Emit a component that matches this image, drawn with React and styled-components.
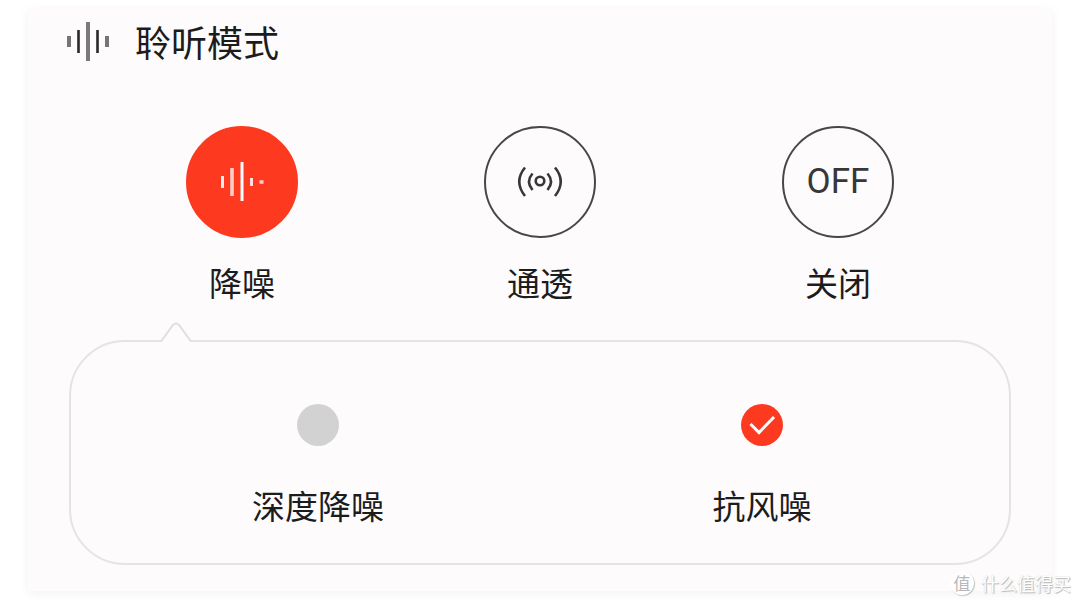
import React, { useState } from 'react';
import styled, { createGlobalStyle } from 'styled-components';

const GlobalStyle = createGlobalStyle`
  * {
    box-sizing: border-box;
  }
  body {
    margin: 0;
    background: #ffffff;
    color: #1c1c1c;
    font-family: "Noto Sans CJK SC", "Noto Sans", sans-serif;
  }
`;

const Page = styled.main`
  position: relative;
  padding: 8px 28px 14px;
  overflow: hidden;
`;

const Card = styled.section`
  padding: 0 41px 26px;
  background: #fdfbfc;
  box-shadow: 0 3px 10px rgba(0, 0, 0, 0.05);
`;

const Header = styled.header`
  display: flex;
  align-items: center;
  gap: 24px;
  height: 66px;

  svg {
    margin-left: -4px;
  }
`;

const Title = styled.h1`
  margin: 0;
  font-size: 36px;
  font-weight: 400;
  line-height: 52px;
`;

const Modes = styled.div`
  display: grid;
  grid-template-columns: repeat(3, 1fr);
  padding: 52px 24px 0;
`;

const ModeButton = styled.button`
  display: flex;
  flex-direction: column;
  align-items: center;
  gap: 20px;
  padding: 0;
  border: 0;
  background: none;
  color: inherit;
  font: inherit;
  font-size: 33px;
  line-height: 48px;
  cursor: pointer;
`;

const Circle = styled.span`
  display: flex;
  align-items: center;
  justify-content: center;
  width: 112px;
  height: 112px;
  border: 2px solid ${({ $active }) => ($active ? '#fd3a20' : '#484647')};
  border-radius: 50%;
  background: ${({ $active }) => ($active ? '#fd3a20' : 'transparent')};
  color: ${({ $active }) => ($active ? '#ffffff' : '#383637')};
`;

const OffText = styled.span`
  font-family: Roboto, "Liberation Sans", sans-serif;
  font-size: 35px;
  line-height: 40px;
`;

const Panel = styled.div`
  position: relative;
  display: grid;
  grid-template-columns: repeat(2, 1fr);
  margin-top: 34px;
  padding: 62px 25px 34px;
  border: 2px solid #e5e3e4;
  border-radius: 56px;
`;

const Pointer = styled.svg`
  position: absolute;
  top: -20px;
  left: 88px;
`;

const Option = styled.label`
  display: flex;
  flex-direction: column;
  align-items: center;
  gap: 35px;
  font-size: 33px;
  line-height: 48px;
  cursor: pointer;
`;

const Tick = styled.span`
  display: grid;
  place-items: center;

  > * {
    grid-area: 1 / 1;
  }
  svg {
    pointer-events: none;
  }
`;

const Checkbox = styled.input`
  appearance: none;
  width: 42px;
  height: 42px;
  margin: 0;
  border-radius: 50%;
  background: #d2d2d3;
  cursor: pointer;

  &:checked {
    background: #fd3a20;
  }
`;

const Watermark = styled.div`
  position: absolute;
  right: 9px;
  bottom: 8px;
  display: flex;
  align-items: center;
  gap: 7px;
  color: #ffffff;
  font-size: 18px;
  line-height: 28px;
  text-shadow: 1px 1px 1px #b5b5b5, 0 0 1px #cccccc;
`;

const Badge = styled.span`
  width: 24px;
  height: 24px;
  border-radius: 50%;
  background: #ffffff;
  box-shadow: 1px 1px 1px #c4c4c4;
  color: #b8b8b8;
  font-size: 17px;
  line-height: 23px;
  text-align: center;
  text-shadow: none;
`;

function SoundIcon() {
  return (
    <svg width="46" height="42" viewBox="0 0 46 42" fill="none" aria-hidden="true">
      <path d="M4 16v11M42 16v11" stroke="#777576" strokeWidth="4" />
      <path d="M13.500 10v23M32.500 10v23" stroke="#2b292a" strokeWidth="2.600" />
      <path d="M23 2v39" stroke="#7c7a7b" strokeWidth="4" />
    </svg>
  );
}

function NoiseIcon() {
  return (
    <svg width="48" height="42" viewBox="0 0 48 42" fill="none" stroke="currentColor" aria-hidden="true">
      <path d="M4.500 15v12" strokeWidth="3" opacity="0.900" />
      <path d="M14 7v28" strokeWidth="3.600" opacity="0.750" />
      <path d="M24 1v39" strokeWidth="3" />
      <path d="M33.500 17v8" strokeWidth="3" opacity="0.850" />
      <path d="M41.500 21h4" strokeWidth="3.500" opacity="0.750" />
    </svg>
  );
}

function TransparencyIcon() {
  return (
    <svg width="48" height="34" viewBox="0 0 48 34" fill="none" stroke="currentColor" strokeWidth="2.600" aria-hidden="true">
      <circle cx="24" cy="16" r="4.300" />
      <path d="M16.500 8.500Q9.500 16.500 16.500 25M31.500 8.500Q38.500 16.500 31.500 25" />
      <path d="M9 2.500Q-2.500 16.500 9 31M39 2.500Q50.500 16.500 39 31" />
    </svg>
  );
}

const MODES = [
  { id: 'anc', label: '降噪', icon: <NoiseIcon /> },
  { id: 'transparency', label: '通透', icon: <TransparencyIcon /> },
  { id: 'off', label: '关闭', icon: <OffText>OFF</OffText> },
];

const OPTIONS = [
  { id: 'deep', label: '深度降噪' },
  { id: 'wind', label: '抗风噪' },
];

export default function App() {
  const [mode, setMode] = useState('anc');
  const [checked, setChecked] = useState({ deep: false, wind: true });

  const toggle = (id) => {
    setChecked({ ...checked, [id]: !checked[id] });
  };

  return (
    <Page>
      <GlobalStyle />
      <Card>
        <Header>
          <SoundIcon />
          <Title>聆听模式</Title>
        </Header>
        <Modes>
          {MODES.map((item) => (
            <ModeButton
              key={item.id}
              type="button"
              aria-pressed={mode === item.id}
              onClick={() => setMode(item.id)}
            >
              <Circle $active={mode === item.id}>{item.icon}</Circle>
              {item.label}
            </ModeButton>
          ))}
        </Modes>
        <Panel>
          <Pointer width="34" height="22" viewBox="0 0 34 22" aria-hidden="true">
            <path d="M2 22V19L14 2.500Q17 -0.500 20 2.500L32 19V22Z" fill="#fdfbfc" />
            <path d="M2 19.500L14 3Q17 0 20 3L32 19.500" fill="none" stroke="#e0dedf" strokeWidth="2" />
          </Pointer>
          {OPTIONS.map((item) => (
            <Option key={item.id} htmlFor={item.id}>
              <Tick>
                <Checkbox
                  id={item.id}
                  type="checkbox"
                  checked={checked[item.id]}
                  onChange={() => toggle(item.id)}
                />
                {checked[item.id] && (
                  <svg width="28" height="22" viewBox="0 0 28 22" fill="none" aria-hidden="true">
                    <path d="M2.500 10L11 18.500L26 3" stroke="#ffffff" strokeWidth="3" />
                  </svg>
                )}
              </Tick>
              {item.label}
            </Option>
          ))}
        </Panel>
      </Card>
      <Watermark>
        <Badge>值</Badge>
        什么值得买
      </Watermark>
    </Page>
  );
}
